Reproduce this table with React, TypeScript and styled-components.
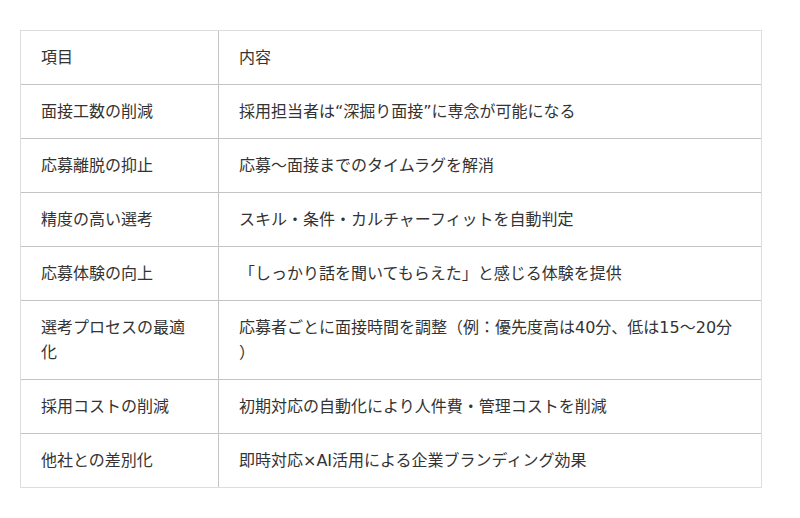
import React from "react";
import styled, { createGlobalStyle } from "styled-components";

const GlobalStyle = createGlobalStyle`
  body {
    margin: 0;
    background: #ffffff;
    font-family: "DejaVu Sans", "Noto Sans CJK JP", sans-serif;
    color: #333333;
  }
`;

const Page = styled.div`
  padding: 30px 0 0 20px;
`;

const StyledTable = styled.table`
  width: 742px;
  border-collapse: separate;
  border-spacing: 0;
  border: 1px solid #dddddd;
  table-layout: fixed;
`;

const Cell = styled.td<{ $wide?: boolean; $last?: boolean }>`
  width: ${({ $wide }) => ($wide ? "auto" : "157px")};
  padding: 14px 20px;
  font-size: 16px;
  line-height: 25px;
  text-align: left;
  vertical-align: top;
  font-weight: normal;
  line-break: anywhere;
  text-spacing-trim: space-all;
  border-bottom: ${({ $last }) => ($last ? "none" : "1px solid #c4c4c4")};
  border-right: ${({ $wide }) => ($wide ? "none" : "1px solid #c4c4c4")};
`;

interface Row {
  item: string;
  content: string;
}

const rows: Row[] = [
  { item: "項目", content: "内容" },
  { item: "面接工数の削減", content: "採用担当者は“深掘り面接”に専念が可能になる" },
  { item: "応募離脱の抑止", content: "応募〜面接までのタイムラグを解消" },
  { item: "精度の高い選考", content: "スキル・条件・カルチャーフィットを自動判定" },
  { item: "応募体験の向上", content: "「しっかり話を聞いてもらえた」と感じる体験を提供" },
  {
    item: "選考プロセスの最適化",
    content: "応募者ごとに面接時間を調整（例：優先度高は40分、低は15〜20分）",
  },
  { item: "採用コストの削減", content: "初期対応の自動化により人件費・管理コストを削減" },
  { item: "他社との差別化", content: "即時対応×AI活用による企業ブランディング効果" },
];

export default function App() {
  return (
    <Page>
      <GlobalStyle />
      <StyledTable>
        <tbody>
          {rows.map((row, i) => {
            const last = i === rows.length - 1;
            return (
              <tr key={row.item}>
                <Cell $last={last}>{row.item}</Cell>
                <Cell $wide $last={last}>
                  {row.content}
                </Cell>
              </tr>
            );
          })}
        </tbody>
      </StyledTable>
    </Page>
  );
}
